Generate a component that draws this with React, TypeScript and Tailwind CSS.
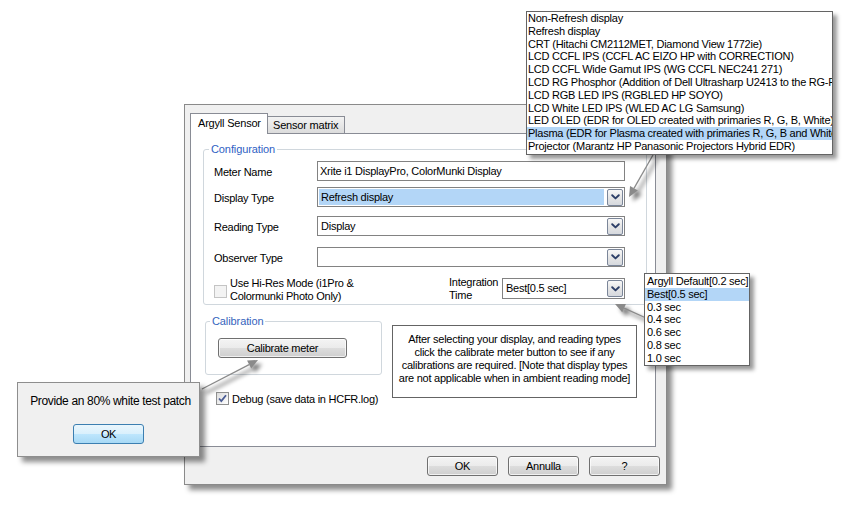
import React from "react";

const displayTypes = [
  "Non-Refresh display",
  "Refresh display",
  "CRT (Hitachi CM2112MET, Diamond View 1772ie)",
  "LCD CCFL IPS (CCFL AC EIZO HP with CORRECTION)",
  "LCD CCFL Wide Gamut IPS (WG CCFL NEC241 271)",
  "LCD RG Phosphor (Addition of Dell Ultrasharp U2413 to the RG-Phosphor family)",
  "LCD RGB LED IPS (RGBLED HP SOYO)",
  "LCD White LED IPS (WLED AC LG Samsung)",
  "LED OLED (EDR for OLED created with primaries R, G, B, White)",
  "Plasma (EDR for Plasma created with primaries R, G, B and White)",
  "Projector (Marantz HP Panasonic Projectors Hybrid EDR)",
];

const integrationTimes = [
  "Argyll Default[0.2 sec]",
  "Best[0.5 sec]",
  "0.3 sec",
  "0.4 sec",
  "0.6 sec",
  "0.8 sec",
  "1.0 sec",
];

function DropBtn() {
  return (
    <div className="w-[16px] h-[17px] shrink-0 rounded-[2px] border border-[#7b8699] bg-[linear-gradient(#f8f8f8,#e6e6e6_50%,#d6d9de)] flex items-center justify-center">
      <svg width="9" height="6" viewBox="0 0 9 6">
        <path d="M1.2 1.2 L4.5 4.4 L7.8 1.2" fill="none" stroke="#2d3f68" strokeWidth="1.9" strokeLinecap="round" strokeLinejoin="round" />
      </svg>
    </div>
  );
}

function Combo({ value, highlight, w, h }: { value: string; highlight?: boolean; w: string; h: string }) {
  return (
    <div className={`${w} ${h} shrink-0 border border-[#828282] bg-white flex items-center pl-[1px] pr-[1px]`}>
      <div className={`flex-1 h-[16px] flex items-center pl-[2px] whitespace-nowrap overflow-hidden ${highlight ? "bg-[#b3d6f7]" : ""}`}>
        {value}
      </div>
      <div className="ml-[3px]">
        <DropBtn />
      </div>
    </div>
  );
}

function WinButton({ children, w }: { children: React.ReactNode; w: string }) {
  return (
    <div className={`${w} h-[20px] shrink-0 rounded-[3px] border border-[#707070] bg-[linear-gradient(#f4f4f4_0%,#ebebeb_50%,#dddddd_50%,#cfcfcf_100%)] flex items-center justify-center shadow-[inset_0_0_0_1px_rgba(255,255,255,0.7)]`}>
      {children}
    </div>
  );
}

function arrowParts(x1: number, y1: number, x2: number, y2: number) {
  const dx = x2 - x1;
  const dy = y2 - y1;
  const L = Math.hypot(dx, dy);
  const ux = dx / L;
  const uy = dy / L;
  const hl = 10;
  const hw = 4.5;
  const bx = x2 - ux * hl;
  const by = y2 - uy * hl;
  const px = -uy;
  const py = ux;
  const pts = `${x2},${y2} ${bx + px * hw},${by + py * hw} ${bx - px * hw},${by - py * hw}`;
  return { bx, by, pts };
}

function Arrow({ x1, y1, x2, y2 }: { x1: number; y1: number; x2: number; y2: number }) {
  const { bx, by, pts } = arrowParts(x1, y1, x2, y2);
  return (
    <g>
      <g transform="translate(4,4)" filter="url(#blur)" opacity="0.55">
        <line x1={x1} y1={y1} x2={bx} y2={by} stroke="#000" strokeWidth="2" />
        <polygon points={pts} fill="#000" />
      </g>
      <line x1={x1} y1={y1} x2={bx} y2={by} stroke="#8a8a8a" strokeWidth="1.3" />
      <polygon points={pts} fill="#8a8a8a" />
    </g>
  );
}

export default function App() {
  return (
    <div className="relative w-[851px] h-[508px] bg-white overflow-hidden font-['Liberation_Sans',Arial,sans-serif] text-[11px] leading-[13px] tracking-[-0.25px] text-black">
      {/* Main dialog */}
      <div className="absolute left-[184px] top-[104px] w-[483px] h-[381px] border border-[#8a8a8a] bg-[#f0f0f0] shadow-[5px_5px_5px_rgba(0,0,0,0.45)] pt-[8px] pl-[5px] pr-[6px] flex flex-col">
        {/* Tabs */}
        <div className="flex items-end h-[20px]">
          <div className="relative z-10 h-[21px] -mb-[1px] w-[78px] border border-b-0 border-[#898c95] bg-white pl-[7px] pt-[3px] tracking-[-0.2px]">
            Argyll Sensor
          </div>
          <div className="h-[17px] w-[77px] border border-l-0 border-b-0 border-[#898c95] bg-[linear-gradient(#f3f3f3,#dcdcdc)] pl-[5px] pt-[2px] tracking-[-0.2px]">
            Sensor matrix
          </div>
        </div>

        {/* Tab page */}
        <div className="w-[466px] h-[314px] shrink-0 border border-[#898c95] bg-white flex flex-col">
          <fieldset className="ml-[12px] mt-[8px] w-[444px] border border-[#d0d7dd] rounded-[3px] pl-[10px] pr-[21px] pb-[1px] min-w-0">
            <legend className="-ml-[5px] px-[2px] h-[14px] leading-[14px] text-[#2f5fc4] tracking-[-0.1px]">Configuration</legend>

            <div className="mt-[5px] flex items-center h-[20px]">
              <div className="w-[103px] mt-[3px]">Meter Name</div>
              <div className="w-[308px] h-[20px] border border-[#828282] pl-[2px] flex items-center whitespace-nowrap">
                Xrite i1 DisplayPro, ColorMunki Display
              </div>
            </div>

            <div className="mt-[6px] flex items-center h-[20px]">
              <div className="w-[103px] mt-[3px]">Display Type</div>
              <Combo value="Refresh display" highlight w="w-[308px]" h="h-[20px]" />
            </div>

            <div className="mt-[9px] flex items-center h-[20px]">
              <div className="w-[103px] mt-[3px]">Reading Type</div>
              <Combo value="Display" w="w-[308px]" h="h-[20px]" />
            </div>

            <div className="mt-[11px] flex items-center h-[20px]">
              <div className="w-[103px] mt-[3px]">Observer Type</div>
              <Combo value="" w="w-[308px]" h="h-[20px]" />
            </div>

            <div className="mt-[9px] flex items-start">
              <div className="w-[235px] flex items-start">
                <div className="mt-[9px] w-[13px] h-[13px] shrink-0 border border-[#c4c4c4] bg-[#f3f3f3]" />
                <div className="ml-[3px] mt-[1px] leading-[13px]">
                  Use Hi-Res Mode (i1Pro &amp;
                  <br />
                  Colormunki Photo Only)
                </div>
              </div>
              <div className="w-[53px] leading-[13px]">
                Integration
                <br />
                Time
              </div>
              <div className="mt-[2px]">
                <Combo value="Best[0.5 sec]" w="w-[123px]" h="h-[21px]" />
              </div>
            </div>
          </fieldset>

          <div className="ml-[14px] mt-[9px] flex items-start">
            <div className="w-[177px] flex flex-col">
              <fieldset className="w-[177px] border border-[#d0d7dd] rounded-[3px] pl-[12px] pb-[16px] min-w-0">
                <legend className="-ml-[8px] px-[2px] h-[14px] leading-[14px] text-[#3564bd] tracking-[-0.1px]">Calibration</legend>
                <div className="mt-[10px]">
                  <WinButton w="w-[129px]">Calibrate meter</WinButton>
                </div>
              </fieldset>
              <div className="mt-[17px] ml-[11px] flex items-center h-[13px]">
                <div className="w-[13px] h-[13px] shrink-0 border border-[#8e8f8f] bg-[linear-gradient(135deg,#dcdcdc,#ffffff)] flex items-center justify-center">
                  <svg width="11" height="11" viewBox="0 0 11 11">
                    <path d="M2 5.5 L4.3 8 L9 2.2" fill="none" stroke="#4a5c94" strokeWidth="1.8" />
                  </svg>
                </div>
                <div className="ml-[3px] mt-[1px]">Debug (save data in HCFR.log)</div>
              </div>
            </div>

            <div className="ml-[10px] mt-[11px] w-[245px] h-[73px] shrink-0 border border-[#646464] text-center pt-[7px] leading-[13px] whitespace-nowrap">
              After selecting your display, and reading types
              <br />
              click the calibrate meter button to see if any
              <br />
              calibrations are required. [Note that display types
              <br />
              are not applicable when in ambient reading mode]
            </div>
          </div>
        </div>

        {/* Bottom buttons */}
        <div className="mt-[9px] flex justify-end gap-[10px]">
          <WinButton w="w-[71px]">OK</WinButton>
          <WinButton w="w-[71px]">Annulla</WinButton>
          <WinButton w="w-[71px]">?</WinButton>
        </div>
      </div>

      {/* Callout arrows */}
      <svg className="absolute left-0 top-0 pointer-events-none" width="851" height="508" viewBox="0 0 851 508">
        <defs>
          <filter id="blur" x="-50%" y="-50%" width="200%" height="200%">
            <feGaussianBlur stdDeviation="2" />
          </filter>
        </defs>
        <Arrow x1={653} y1={155} x2={629} y2={197} />
        <Arrow x1={646} y1={318} x2={615} y2={304} />
        <Arrow x1={202} y1={389} x2={258} y2={360} />
      </svg>

      {/* Message popup */}
      <div className="absolute left-[17px] top-[382px] w-[183px] h-[75px] border border-[#8e8e8e] bg-[#f0f0f0] shadow-[5px_5px_5px_rgba(0,0,0,0.45)] flex flex-col items-center pt-[11px] text-[12px] tracking-[-0.35px]">
        <div className="leading-[14px] pl-[4px] whitespace-nowrap">Provide an 80% white test patch</div>
        <div className="mt-[16px] w-[71px] h-[20px] rounded-[3px] border border-[#3c7fb1] bg-[linear-gradient(#eaf6fd_0%,#d9f0fc_50%,#bee6fd_50%,#a7d9f5_100%)] flex items-center justify-center text-[11px]">
          OK
        </div>
      </div>

      {/* Display type dropdown list */}
      <div className="absolute left-[526px] top-[11px] w-[307px] h-[144px] border border-[#646464] bg-white shadow-[4px_4px_4px_rgba(0,0,0,0.4)] overflow-hidden">
        {displayTypes.map((t, i) => (
          <div
            key={t}
            className={`h-[12.8px] leading-[12.8px] pl-[1px] whitespace-nowrap ${i === 9 ? "bg-[#b3d6f7]" : ""}`}
          >
            {t}
          </div>
        ))}
      </div>

      {/* Integration time dropdown list */}
      <div className="absolute left-[644px] top-[273px] w-[106px] h-[93px] border border-[#646464] bg-white shadow-[4px_4px_4px_rgba(0,0,0,0.4)] overflow-hidden pt-[1px]">
        {integrationTimes.map((t, i) => (
          <div
            key={t}
            className={`h-[12.8px] leading-[12.8px] pl-[2px] whitespace-nowrap ${i === 1 ? "bg-[#b3d6f7]" : ""}`}
          >
            {t}
          </div>
        ))}
      </div>
    </div>
  );
}
